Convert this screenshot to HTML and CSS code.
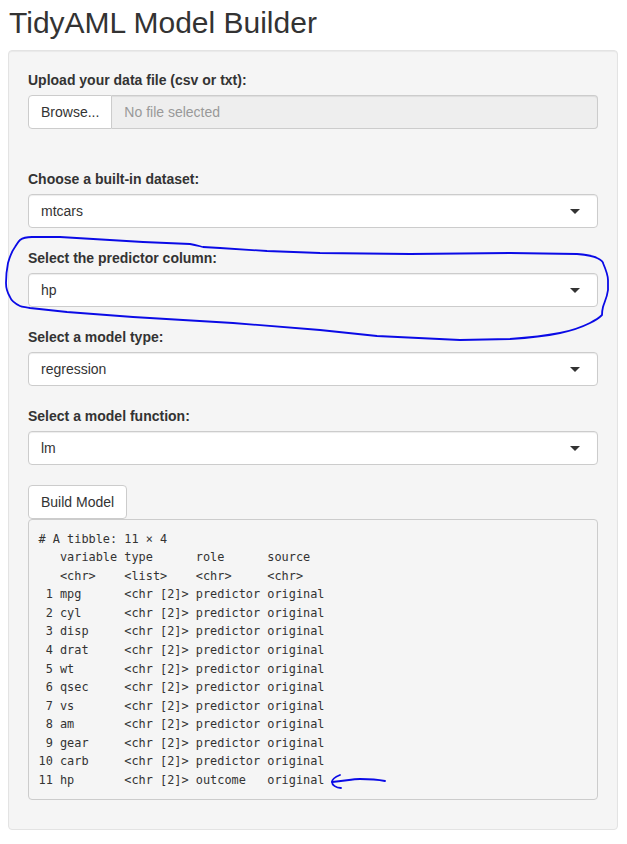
FILE: index.html
```html
<!DOCTYPE html>
<html lang="en">
<head>
<meta charset="utf-8">
<title>TidyAML Model Builder</title>
<link rel="stylesheet" href="styles.css">
</head>
<body>
<div class="container">
  <h2 class="title">TidyAML Model Builder</h2>
  <div class="well">
    <div class="form-group file-group">
      <label class="control-label">Upload your data file (csv or txt):</label>
      <div class="input-group">
        <span class="btn btn-file">Browse...</span>
        <span class="file-name">No file selected</span>
      </div>
    </div>
    <div class="form-group">
      <label class="control-label">Choose a built-in dataset:</label>
      <div class="select"><span class="select-value">mtcars</span><span class="caret"></span></div>
    </div>
    <div class="form-group">
      <label class="control-label">Select the predictor column:</label>
      <div class="select"><span class="select-value">hp</span><span class="caret"></span></div>
    </div>
    <div class="form-group">
      <label class="control-label">Select a model type:</label>
      <div class="select"><span class="select-value">regression</span><span class="caret"></span></div>
    </div>
    <div class="form-group">
      <label class="control-label">Select a model function:</label>
      <div class="select"><span class="select-value">lm</span><span class="caret"></span></div>
    </div>
    <button class="btn btn-default" type="button">Build Model</button>
<pre class="output"># A tibble: 11 × 4
   variable type      role      source  
   &lt;chr&gt;    &lt;list&gt;    &lt;chr&gt;     &lt;chr&gt;   
 1 mpg      &lt;chr [2]&gt; predictor original
 2 cyl      &lt;chr [2]&gt; predictor original
 3 disp     &lt;chr [2]&gt; predictor original
 4 drat     &lt;chr [2]&gt; predictor original
 5 wt       &lt;chr [2]&gt; predictor original
 6 qsec     &lt;chr [2]&gt; predictor original
 7 vs       &lt;chr [2]&gt; predictor original
 8 am       &lt;chr [2]&gt; predictor original
 9 gear     &lt;chr [2]&gt; predictor original
10 carb     &lt;chr [2]&gt; predictor original
11 hp       &lt;chr [2]&gt; outcome   original</pre>
  </div>
</div>
<svg class="ink" width="627" height="844" viewBox="0 0 627 844" aria-hidden="true">
  <path d="M20,240 C24,237 28,237 32,237 L60,237 L143,242 L190,244 C196,245 199,246 203,247 L220,248 L267,251 L320,253 L410,254 L510,253 L577,254 C588,255 594,256 597,258 C601,260 603,262 603,263 C606,270 608,276 608,280 L608,290 C607,298 604,303 603,307 C602,311 602,313 602,315 C598,319 594,321 590,323 C580,328 570,331 560,333 C540,337 525,338 510,339 L460,340 L377,336 L320,330 L233,323 L133,317 L67,312 L30,308 C25,307 22,307 20,306 C14,303 11,300 10,297 C7,292 6,288 6,283 C6,275 7,268 8,263 C10,256 12,251 15,247 C17,244 18,242 20,240" />
  <path d="M385,781 C375,779 368,779 360,779 C352,779 345,781 332,782" />
  <path d="M340,775 C335,777 332,780 332,782 C332,785 336,788 341,788" />
</svg>
</body>
</html>
```
FILE: styles.css
```css
* {
  box-sizing: border-box;
}

html, body {
  margin: 0;
  padding: 0;
  background: #fff;
}

body {
  font-family: "Liberation Sans", Arial, Helvetica, sans-serif;
  font-size: 14px;
  line-height: 1.42857143;
  color: #333;
  position: relative;
  width: 627px;
  height: 844px;
  overflow: hidden;
}

.container {
  padding: 0 9px 0 8px;
}

.title {
  font-size: 30px;
  font-weight: 500;
  line-height: 33px;
  margin: 6px 0 11px 1px;
  color: #333;
}

.well {
  background: #f5f5f5;
  border: 1px solid #e3e3e3;
  border-radius: 4px;
  box-shadow: inset 0 1px 1px rgba(0, 0, 0, 0.05);
  padding: 19px;
  display: flex;
  flex-direction: column;
  align-items: flex-start;
}

.form-group {
  width: 100%;
  margin-bottom: 20px;
  display: flex;
  flex-direction: column;
  align-items: flex-start;
}

.file-group {
  margin-bottom: 40px;
}

.control-label {
  font-weight: 700;
  margin-bottom: 5px;
  line-height: 20px;
}

.input-group {
  display: flex;
  width: 100%;
  height: 34px;
}

.btn-file {
  display: flex;
  align-items: center;
  padding: 6px 12px;
  background: #fff;
  border: 1px solid #ccc;
  border-radius: 4px 0 0 4px;
  color: #333;
  white-space: nowrap;
}

.file-name {
  flex: 1;
  display: flex;
  align-items: center;
  padding: 6px 12px;
  background: #eee;
  border: 1px solid #ccc;
  border-left: 0;
  border-radius: 0 4px 4px 0;
  color: #999;
  box-shadow: inset 0 1px 1px rgba(0, 0, 0, 0.075);
}

.select {
  width: 100%;
  height: 34px;
  display: flex;
  align-items: center;
  justify-content: space-between;
  padding: 6px 17px 6px 12px;
  background: #fff;
  border: 1px solid #ccc;
  border-radius: 4px;
  box-shadow: inset 0 1px 1px rgba(0, 0, 0, 0.075);
}

.select-value {
  color: #333;
}

.caret {
  width: 0;
  height: 0;
  border-style: solid;
  border-width: 5px 5px 0 5px;
  border-color: #333 transparent transparent transparent;
  margin-top: 1px;
}

.btn-default {
  font-family: "Liberation Sans", Arial, Helvetica, sans-serif;
  font-size: 14px;
  line-height: 20px;
  height: 34px;
  padding: 6px 12px;
  background: #fff;
  border: 1px solid #ccc;
  border-radius: 4px;
  color: #333;
  margin: 0;
}

.output {
  width: 100%;
  margin: 0 0 10px 0;
  padding: 9.5px;
  font-family: "DejaVu Sans Mono", "Liberation Mono", monospace;
  font-size: 11.88px;
  line-height: 18.571px;
  color: #333;
  background: #f5f5f5;
  border: 1px solid #ccc;
  border-radius: 4px;
  white-space: pre;
  overflow: hidden;
}

.ink {
  position: absolute;
  top: 0;
  left: 0;
  pointer-events: none;
  fill: none;
  stroke: #0a0ae6;
  stroke-width: 1.8;
  stroke-linecap: round;
  stroke-linejoin: round;
}
```
